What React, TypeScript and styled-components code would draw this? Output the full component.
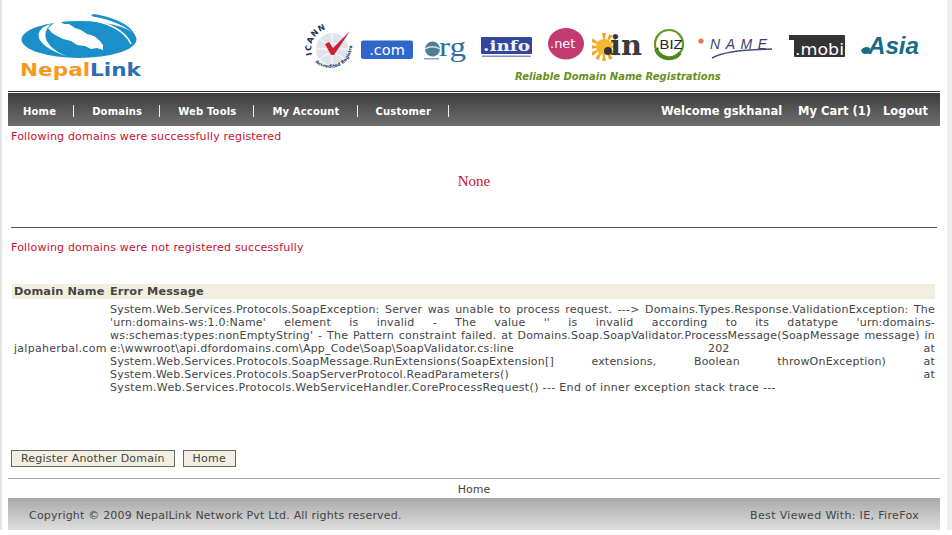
import styled, { createGlobalStyle } from 'styled-components';

const GlobalStyle = createGlobalStyle`
  html, body {
    margin: 0;
    padding: 0;
    background: #fff;
  }
`;

const Page = styled.div`
  box-sizing: border-box;
  width: 952px;
  height: 530px;
  padding: 0 6px;
  border-left: 2px solid #e4e4e4;
  border-right: 5px solid #efefef;
  font-family: 'DejaVu Sans', Verdana, sans-serif;
  font-size: 11px;
  color: #444;
  overflow: hidden;
`;

const Wrap = styled.div`
  width: 932px;
`;

// Header
const Header = styled.div`
  display: flex;
  height: 92px;
  box-sizing: border-box;
  border-bottom: 1px solid #333;
`;

const LogoBox = styled.div`
  width: 297px;
  padding: 13px 0 0 9px;
  box-sizing: border-box;
`;

const Brand = styled.div`
  display: flex;
  flex-direction: column;
  padding-top: 22px;
`;

const Strip = styled.div`
  display: flex;
  height: 50px;
`;

const Badge = styled.svg<{ $left: number }>`
  display: block;
  flex: none;
  height: 50px;
  margin-left: ${(p) => p.$left}px;
`;

const Tagline = styled.div`
  margin: -1px 0 0 210px;
  font-size: 10px;
  line-height: 12px;
  font-weight: bold;
  font-style: italic;
  color: #6b8e1e;
`;

// Nav bar
const Nav = styled.div`
  display: flex;
  justify-content: space-between;
  align-items: center;
  height: 33px;
  margin-top: 1px;
  padding: 3px 12px 0 15px;
  box-sizing: border-box;
  background: linear-gradient(#3d3d3d, #6f6f6f);
  color: #fff;
  font-weight: bold;
`;

const NavLeft = styled.div`
  display: flex;
  align-items: center;
  font-size: 10px;
  letter-spacing: 0.17px;
`;

const NavSep = styled.span`
  width: 1px;
  height: 12px;
  margin: 0 18px 0 17px;
  background: #eee;
`;

const NavRight = styled.div`
  display: flex;
  font-size: 11.5px;
`;

const NavAction = styled.span<{ $left: number }>`
  margin-left: ${(p) => p.$left}px;
`;

// Content
const Content = styled.div`
  padding: 0 3px;
`;

const Notice = styled.div`
  color: #c8102e;
  line-height: 13px;
  padding-top: 4px;
  letter-spacing: 0.19px;
`;

const NoneText = styled.div`
  margin-top: 30px;
  text-align: center;
  font-family: 'Liberation Serif', serif;
  font-size: 15px;
  line-height: 16px;
  color: #c8102e;
`;

const Rule = styled.hr`
  height: 1px;
  border: 0;
  margin: 38px 0 9px;
  background: #555;
`;

const ErrorTable = styled.div`
  display: grid;
  grid-template-columns: 96px 1fr;
  margin: 30px 0 0 1px;
  width: 923px;
`;

const HeadCell = styled.div`
  padding: 0 2px;
  height: 15px;
  line-height: 15px;
  font-weight: bold;
  font-size: 11.3px;
  letter-spacing: 0.15px;
  white-space: nowrap;
  background: #f2eee0;
  color: #444;
`;

const DomainCell = styled.div`
  display: flex;
  align-items: center;
  padding: 0 2px;
  margin-top: 4px;
  letter-spacing: 0.27px;
`;

const Message = styled.div`
  margin-top: 4px;
  padding: 0 0 0 2px;
`;

const Line = styled.div<{ $last?: boolean }>`
  height: 13px;
  line-height: 13px;
  letter-spacing: ${(p) => (p.$last ? 0.33 : 0.2)}px;
  text-align: justify;
  text-align-last: ${(p) => (p.$last ? 'left' : 'justify')};
  overflow: hidden;
`;

const Actions = styled.div`
  display: flex;
  gap: 8px;
  margin-top: 56px;
`;

const Button = styled.button`
  height: 17px;
  padding: 0 9px;
  border: 1px solid #666;
  background: #f2eee0;
  color: #444;
  font-family: inherit;
  font-size: 11px;
  line-height: 15px;
  letter-spacing: 0.21px;
`;

const FootRule = styled.hr`
  height: 1px;
  border: 0;
  margin: 11px 0 0;
  background: #aaa;
`;

const FootLink = styled.div`
  height: 19px;
  line-height: 21px;
  text-align: center;
`;

const Footer = styled.div`
  display: flex;
  justify-content: space-between;
  align-items: center;
  height: 32px;
  padding: 2px 21px 0 21px;
  box-sizing: border-box;
  background: linear-gradient(#a9a9a9, #dedede);
  color: #444;
`;

const Copyright = styled.span`
  letter-spacing: 0.2px;
`;

const BestViewed = styled.span`
  letter-spacing: 0.34px;
`;

const messageLines = [
  "System.Web.Services.Protocols.SoapException: Server was unable to process request. ---> Domains.Types.Response.ValidationException: The",
  "'urn:domains-ws:1.0:Name' element is invalid - The value '' is invalid according to its datatype 'urn:domains-",
  "ws:schemas:types:nonEmptyString' - The Pattern constraint failed. at Domains.Soap.SoapValidator.ProcessMessage(SoapMessage message) in",
  "e:\\wwwroot\\api.dfordomains.com\\App_Code\\Soap\\SoapValidator.cs:line 202 at",
  "System.Web.Services.Protocols.SoapMessage.RunExtensions(SoapExtension[] extensions, Boolean throwOnException) at",
  "System.Web.Services.Protocols.SoapServerProtocol.ReadParameters() at",
  "System.Web.Services.Protocols.WebServiceHandler.CoreProcessRequest() --- End of inner exception stack trace ---",
];

const navItems = ['Home', 'Domains', 'Web Tools', 'My Account', 'Customer'];

const sunRays = [0, 30, 60, 90, 120, 150, 180, 210, 240, 270, 300];

function Logo() {
  return (
    <svg width="128" height="68" viewBox="0 0 128 68" style={{ display: 'block' }}>
      <ellipse cx="62" cy="26.5" rx="57.5" ry="18.5" fill="#1a8fca" />
      {/* left crescent */}
      <path d="M34 11 C16 16 14 32 52 44 C30 36 22 22 34 11 Z" fill="#fff" />
      {/* the country shape */}
      <path d="M31 15 L37 10 L42 8 L47 11 L52 11 L58 15 L64 17 L70 21 L77 23 L83 28 L86 32 L86 37 L80 35 L74 36 L68 33 L60 32 L54 28 L46 26 L40 23 L35 20 Z" fill="#fff" />
      {/* top right swoosh */}
      <path d="M70 6.5 C90 9 108 17 114 31" fill="none" stroke="#fff" strokeWidth="1.6" />
      <path d="M76 1 C96 4 114 11 119 24 C112 14 96 7 74 3 Z" fill="#1a8fca" />
      <text x="3" y="63" fontFamily="'DejaVu Sans', sans-serif" fontSize="18" fontWeight="bold" textLength="121" lengthAdjust="spacingAndGlyphs">
        <tspan fill="#f7981d">Nepal</tspan>
        <tspan fill="#2a6db5">Link</tspan>
      </text>
    </svg>
  );
}

function Icann() {
  return (
    <Badge $left={0} width="50" viewBox="0 0 50 50">
      <circle cx="27" cy="27" r="16" fill="#dfe3ea" />
      <path d="M11 27 H43 M27 11 V43 M15 17 C22 24 32 24 39 17 M15 37 C22 30 32 30 39 37" fill="none" stroke="#fff" strokeWidth="1" />
      <path id="icann-top" d="M7 33 A21 21 0 0 1 37 8.5" fill="none" />
      <text fontFamily="'DejaVu Sans', sans-serif" fontSize="8" fontWeight="bold" fill="#1c2f5c" letterSpacing="1">
        <textPath href="#icann-top">ICANN</textPath>
      </text>
      <path id="icann-bot" d="M10 40 A22 22 0 0 0 47 24" fill="none" />
      <text fontFamily="'DejaVu Sans', sans-serif" fontSize="4.6" fontWeight="bold" fill="#1c2f5c">
        <textPath href="#icann-bot">Accredited Registrar</textPath>
      </text>
      <path d="M20 22 L24 20 L28 26 L45 9 L29 33 L26 33 Z" fill="#cf2136" />
    </Badge>
  );
}

function Tlds() {
  return (
    <>
      <Badge $left={6} width="52" viewBox="0 0 52 50">
        <rect x="0" y="18.5" width="52" height="18.5" rx="2" fill="#2f66c9" />
        <text x="26" y="33" textAnchor="middle" fontFamily="'DejaVu Sans', sans-serif" fontSize="14.5" fill="#fff">.com</text>
      </Badge>
      <Badge $left={10} width="43" viewBox="0 0 43 50">
        <circle cx="9.5" cy="27" r="7.5" fill="#4c7f96" />
        <path d="M2 27 C7 24 12 24 17 27" fill="none" stroke="#cfe0e6" strokeWidth="1.4" />
        <text x="16" y="33.5" fontFamily="'Liberation Serif', serif" fontSize="27" fill="#2f6f9e" textLength="27" lengthAdjust="spacingAndGlyphs">rg</text>
        <rect x="1" y="36" width="15" height="1.5" fill="#8fa3ad" />
      </Badge>
      <Badge $left={15} width="51" viewBox="0 0 51 50">
        <rect x="0" y="15" width="51" height="17" rx="1" fill="#33479a" />
        <text x="2" y="29" fontFamily="'DejaVu Serif', serif" fontSize="15" fontWeight="bold" fill="#eef0fa" textLength="47" lengthAdjust="spacingAndGlyphs">.info</text>
        <rect x="1" y="33.5" width="49" height="1.5" fill="#8a90b8" />
      </Badge>
      <Badge $left={16} width="36" viewBox="0 0 36 50">
        <ellipse cx="18" cy="21.7" rx="18" ry="15.7" fill="#c23a70" />
        <text x="2" y="26" fontFamily="'DejaVu Sans', sans-serif" fontSize="13" fill="#fff">.net</text>
      </Badge>
      <Badge $left={8} width="50" viewBox="0 0 50 50">
        {sunRays.map((deg) => (
          <path key={deg} d="M10 -14 L14 -14 L12 -3 Z" transform={`rotate(${deg} 12 25) translate(0 25)`} fill="#f5a623" />
        ))}
        <circle cx="12" cy="25" r="8" fill="#f7b733" />
        <circle cx="16" cy="29" r="4" fill="#333" />
        <text x="18" y="33" fontFamily="'DejaVu Serif', serif" fontSize="27" fontWeight="bold" fill="#3a3a3a" textLength="32" lengthAdjust="spacingAndGlyphs">in</text>
      </Badge>
      <Badge $left={11} width="33" viewBox="0 0 33 50">
        <circle cx="16" cy="22" r="14" fill="#fff" stroke="#5f9a1e" strokeWidth="2.2" />
        <path d="M3 27 A14 14 0 0 0 27 31" fill="none" stroke="#4c8a1c" strokeWidth="4" />
        <text x="2.5" y="26.5" fontFamily="'Liberation Sans', sans-serif" fontSize="12" fill="#222" textLength="27" lengthAdjust="spacingAndGlyphs">.BIZ</text>
      </Badge>
      <Badge $left={11} width="76" viewBox="0 0 76 50">
        <circle cx="4" cy="19" r="2.6" fill="#e8734a" />
        <text x="13" y="27" fontFamily="'Liberation Sans', sans-serif" fontSize="14" fontStyle="italic" fill="#3c3f6e" textLength="57">NAME</text>
        <path d="M15 36 C24 31 38 28 75 27" fill="none" stroke="#4a4d7c" strokeWidth="1.6" />
      </Badge>
      <Badge $left={15} width="58" viewBox="0 0 58 50">
        <path d="M1 13 H56 Q57 13 57 14 V34 Q57 35 56 35 H7 Q6 35 6 34 V18 H1 Z" fill="#333" />
        <text x="7" y="32.5" fontFamily="'DejaVu Sans', sans-serif" fontSize="15" fill="#fff" textLength="49" lengthAdjust="spacingAndGlyphs">.mobi</text>
      </Badge>
      <Badge $left={15} width="60" viewBox="0 0 60 50">
        <path d="M0 28 Q4 23 9 26 Q9 32 4 32 Q1 32 0 28 Z" fill="#176b85" />
        <text x="7" y="32" fontFamily="'Liberation Sans', sans-serif" fontSize="23" fontStyle="italic" fontWeight="bold" fill="#176b85" textLength="51" lengthAdjust="spacingAndGlyphs">Asia</text>
      </Badge>
    </>
  );
}

export default function App() {
  return (
    <Page>
      <GlobalStyle />
      <Wrap>
        <Header>
          <LogoBox>
            <Logo />
          </LogoBox>
          <Brand>
            <Strip>
              <Icann />
              <Tlds />
            </Strip>
            <Tagline>Reliable Domain Name Registrations</Tagline>
          </Brand>
        </Header>
        <Nav>
          <NavLeft>
            {navItems.map((item) => (
              <span key={item} style={{ display: 'contents' }}>
                <span>{item}</span>
                <NavSep />
              </span>
            ))}
          </NavLeft>
          <NavRight>
            <NavAction $left={0}>Welcome gskhanal</NavAction>
            <NavAction $left={16}>My Cart (1)</NavAction>
            <NavAction $left={12}>Logout</NavAction>
          </NavRight>
        </Nav>
        <Content>
          <Notice>Following domains were successfully registered</Notice>
          <NoneText>None</NoneText>
          <Rule />
          <Notice>Following domains were not registered successfully</Notice>
          <ErrorTable>
            <HeadCell>Domain Name</HeadCell>
            <HeadCell>Error Message</HeadCell>
            <DomainCell>jalpaherbal.com</DomainCell>
            <Message>
              {messageLines.map((line, i) => (
                <Line key={i} $last={i === messageLines.length - 1}>
                  {line}
                </Line>
              ))}
            </Message>
          </ErrorTable>
          <Actions>
            <Button>Register Another Domain</Button>
            <Button>Home</Button>
          </Actions>
        </Content>
        <FootRule />
        <FootLink>Home</FootLink>
        <Footer>
          <Copyright>Copyright © 2009 NepalLink Network Pvt Ltd. All rights reserved.</Copyright>
          <BestViewed>Best Viewed With: IE, FireFox</BestViewed>
        </Footer>
      </Wrap>
    </Page>
  );
}
